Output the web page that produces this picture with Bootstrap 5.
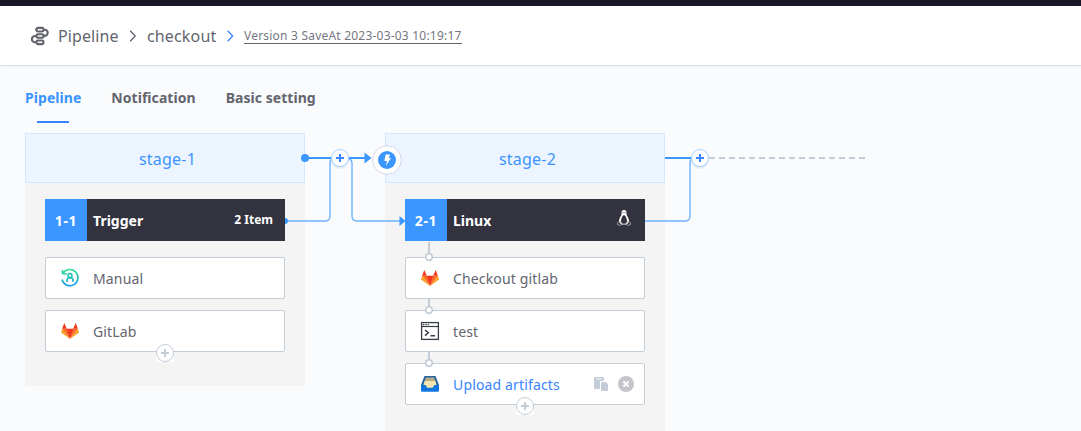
<!DOCTYPE html>
<html lang="en">
<head>
<meta charset="utf-8">
<title>Pipeline</title>
<meta name="viewport" content="width=device-width, initial-scale=1">
<link rel="stylesheet" href="https://cdn.jsdelivr.net/npm/bootstrap@5.3.0/dist/css/bootstrap.min.css">
<style>
body{font-family:"Noto Sans","Open Sans",sans-serif;background:#fafbfd;color:#63656e;height:431px;overflow:hidden}
.topbar{height:6px;background:#181727}
.crumbs{height:60px;background:#fff;border-bottom:1px solid #dcdee5;box-shadow:0 1px 3px rgba(0,0,0,.05);padding-left:30px;font-size:16px;line-height:24px}
.crumbs svg{flex:none}
.crumb-a{width:62px;margin-left:8px;letter-spacing:.1px}
.crumb-b{width:70px;letter-spacing:.15px}
.version{font-size:12px;line-height:15px;border-bottom:1px solid #63656e;width:218px;color:#75777f;letter-spacing:.21px}
.tabs{height:67px;padding:20px 0 0 25px;gap:30px;font-size:14px;font-weight:700;line-height:24px;letter-spacing:.05px}
.tab-on{color:#3a94ff}
.tab-on::after{content:"";display:block;width:32px;height:2px;margin:11px auto 0;background:#3a84ff}
.canvas{gap:80px;padding-left:25px;height:298px}
.stage{width:280px;flex:none;background:#f4f4f4}
.stage-one{height:253px}
.stage-two{height:298px}
.stage-head{height:50px;background:#ecf4ff;border:1px solid #d2e7ff;color:#3c96ff;font-size:16px;padding:2px 0 0 5px;letter-spacing:.2px}
.job{height:42px;margin:16px 20px 0;background:#33333f;color:#fff;font-size:14px;font-weight:700}
.job-no{width:42px;height:42px;background:#3c96ff;letter-spacing:.7px}
.job-name{margin-left:6px}
.item-count{font-size:12px}
.steps{margin:16px 20px 0;gap:11px}
.step{height:42px;flex:none;background:#fff;border:1px solid #c3cdd7;border-radius:2px;padding:0 9px 0 14px;font-size:14px}
.step svg{flex:none}
.step .label{margin-left:13px;white-space:nowrap;letter-spacing:.15px}
.label-on{color:#3a84ff}
.wires{left:0;top:0;pointer-events:none}
</style>
</head>
<body>
<div class="topbar"></div>
<header class="crumbs d-flex align-items-center">
  <svg width="20" height="20" viewBox="0 0 20 20" fill="none" stroke="#63656e" stroke-width="2.1"><rect x="6.5" y="1.9" width="7" height="3.600" rx="1.400"/><rect x="6.5" y="8.200" width="7" height="3.600" rx="1.400"/><rect x="6.5" y="14.500" width="7" height="3.600" rx="1.400"/><path d="M13.300 3.700h1.300a3.100 3.100 0 0 1 0 6.200h-1.300M6.700 3.700H5.300M6.700 10H5a3.100 3.100 0 0 0 0 6.300h1.700"/></svg>
  <span class="crumb-a">Pipeline</span>
  <svg width="27" height="20" viewBox="0 0 27 20" fill="none" stroke="#63656e" stroke-width="1.300"><path d="M10.200 4.800l5 5.200-5 5.200"/></svg>
  <span class="crumb-b">checkout</span>
  <svg width="27" height="20" viewBox="0 0 27 20" fill="none" stroke="#3a84ff" stroke-width="1.300"><path d="M10.700 4.800l5 5.200-5 5.200"/></svg>
  <span class="version text-nowrap">Version 3 SaveAt 2023-03-03 10:19:17</span>
</header>
<nav class="tabs d-flex">
  <div class="tab-on">Pipeline</div>
  <div>Notification</div>
  <div>Basic setting</div>
</nav>
<main class="canvas position-relative overflow-hidden d-flex align-items-start">
  <section class="stage stage-one">
    <div class="stage-head d-flex align-items-center justify-content-center">stage-1</div>
    <div class="job d-flex align-items-center">
      <span class="job-no d-flex align-items-center justify-content-center">1-1</span>
      <span class="flex-grow-1 job-name">Trigger</span>
      <span class="me-2 pe-1 item-count">2 Item</span>
    </div>
    <div class="steps d-flex flex-column">
      <div class="step d-flex align-items-center">
        <svg width="20" height="20" viewBox="0 0 20 20" fill="none" stroke-width="1.600"><defs><linearGradient id="teal" x1="0" y1="0" x2="0" y2="1"><stop offset="0" stop-color="#2fe08e"/><stop offset="1" stop-color="#169cf0"/></linearGradient></defs><path stroke="url(#teal)" d="M3.400 4.800A8.100 8.100 0 1 1 2 11.500M6.800 6L2.500 5.600V2M7 13.900v-1.500c0-1.800 1.300-2.800 3-2.800s3 1 3 2.800v1.500"/><circle cx="10" cy="7.600" r="2" stroke="#24c8b0"/></svg>
        <span class="label">Manual</span>
      </div>
      <div class="step d-flex align-items-center">
        <svg width="20" height="20" viewBox="0 0 20 20"><path fill="#fca326" d="M10 18L1 11.400l1.100-3.600L10 18l7.900-10.200 1.100 3.600z"/><path fill="#fc6d26" d="M10 18L2.100 7.800h4.700L10 18l3.200-10.200h4.700z"/><path fill="#f2371d" d="M10 18L6.500 7.800h7zM2.100 7.800L4.300 1.900l2.500 5.900zM17.900 7.800l-2.200-5.900-2.500 5.900z"/></svg>
        <span class="label">GitLab</span>
      </div>
    </div>
  </section>
  <section class="stage stage-two">
    <div class="stage-head d-flex align-items-center justify-content-center">stage-2</div>
    <div class="job d-flex align-items-center">
      <span class="job-no d-flex align-items-center justify-content-center">2-1</span>
      <span class="flex-grow-1 job-name">Linux</span>
      <svg class="me-2 mb-1" width="26" height="18" viewBox="0 -1 26 18"><path fill="#fff" d="M13 0c-2.100 0-2.700 1.400-2.500 3.300.1 1.600-.4 2.300-1.400 4-.9 1.600-1.300 3.100-1 4.700l2 2.600h5.800l2-2.600c.3-1.600-.1-3.100-1-4.700-1-1.700-1.500-2.400-1.400-4C15.700 1.400 15.100 0 13 0z"/><path fill="#33333f" d="M11.700 5.500h2.600c.2 1.700 2 3.200 1.700 6.200-.8 1.700-1.700 2-3 2s-2.200-.3-3-2c-.3-3 1.500-4.500 1.700-6.200zM11.600 2.100h.8v1h-.8zM13.600 2.100h.8v1h-.8z"/><path fill="none" stroke="#aaaab2" stroke-width=".8" d="M8.500 11.500l-2.100 1.200.2 2 3.100.7 1.300-1.200-1.300-2.500zM17.500 11.500l2.100 1.200-.2 2-3.100.7-1.300-1.200 1.300-2.500z"/></svg>
    </div>
    <div class="steps d-flex flex-column">
      <div class="step d-flex align-items-center">
        <svg width="20" height="20" viewBox="0 0 20 20"><path fill="#fca326" d="M10 18L1 11.400l1.100-3.600L10 18l7.900-10.200 1.100 3.600z"/><path fill="#fc6d26" d="M10 18L2.100 7.800h4.700L10 18l3.200-10.200h4.700z"/><path fill="#f2371d" d="M10 18L6.500 7.800h7zM2.100 7.800L4.300 1.900l2.500 5.900zM17.900 7.800l-2.200-5.900-2.500 5.900z"/></svg>
        <span class="label">Checkout gitlab</span>
      </div>
      <div class="step d-flex align-items-center">
        <svg width="20" height="20" viewBox="0 0 20 20" fill="none" stroke="#3a3c48"><rect x="1.600" y="1.600" width="16.800" height="16.800" stroke-width="1.300"/><path stroke-width="1.200" d="M1.500 5.500h17"/><path stroke-width="1.300" stroke-dasharray="1.300 1" d="M3 3.600h6"/><path stroke-width="1.500" d="M5 9l3.300 2.800L5 14.600M10.500 14.700H15"/></svg>
        <span class="label">test</span>
      </div>
      <div class="step d-flex align-items-center">
        <svg width="20" height="20" viewBox="0 0 20 20"><path fill="#2563a3" d="M4.500 2h11l3.500 9v5H1v-5z"/><path fill="#b8ad84" d="M5.800 3.400h8.400l1.500 5H4.300z"/><path fill="#f2e5af" d="M4.600 7h10.800l1.300 4.200L14.500 15h-9l-2.200-3.800z"/><path fill="#0f76df" d="M1 11h4.700l1.400 2.700h5.800l1.400-2.700H19v5.600q0 1.200-1.200 1.200H2.200Q1 17.800 1 16.600z"/></svg>
        <span class="label label-on flex-grow-1">Upload artifacts</span>
        <svg width="16" height="16" viewBox="0 0 16 16" fill="#c3cdd7"><path d="M2 1h8q1 0 1 1v3H8.200Q7 5 7 6.200V13H2q-1 0-1-1V2q0-1 1-1z"/><path d="M9 6h4l2 2.400V14q0 1-1 1H9q-1 0-1-1V7q0-1 1-1z"/><path fill="#fff" d="M3.500 2.500h5v1h-5z"/></svg>
        <svg class="ms-2" width="18" height="18" viewBox="0 0 18 18"><circle cx="9" cy="9" r="8" fill="#c4c6cc"/><path d="M6.400 6.400l5.200 5.200M11.600 6.400l-5.200 5.200" stroke="#fff" stroke-width="2"/></svg>
      </div>
    </div>
  </section>
  <!-- Connectors and nodes drawn over the stages -->
  <svg class="wires position-absolute" width="1081" height="298" viewBox="0 133 1081 298" fill="none">
    <defs>
      <g id="add"><circle r="9" cy="2" fill="#3c96ff" opacity=".12"/><circle r="8.500" fill="#fff" stroke="#a9d1ff"/><path d="M-4 0h8M0-4v8" stroke="#3a84ff" stroke-width="2"/></g>
      <g id="more"><path fill="#fff" d="M-9 0H9V9H-9z"/><circle r="8.500" fill="#fff" stroke="#c3cdd7"/><path d="M-4 0h8M0-4v8" stroke="#c3cdd7" stroke-width="2"/></g>
      <circle id="dot" r="3.300" fill="#fff" stroke="#c3cdd7" stroke-width="1.700"/>
    </defs>
    <g stroke="#6eb1ff" stroke-width="1.400"><path d="M285 221h40q5 0 5-5v-53q0-5 5-5M345 158q7 0 7 5v53q0 5 5 5h44M645 221h40q5 0 5-5v-53q0-5 5-5"/></g>
    <g stroke="#3c96ff" stroke-width="2"><path d="M305 158h61M665 158h35"/></g>
    <path d="M709 158h156" stroke="#c3c9d7" stroke-width="2" stroke-dasharray="6 4"/>
    <g fill="#3c96ff"><circle cx="305" cy="158" r="4"/><path d="M285 218a3 3 0 0 1 0 6zM364.500 152.500l7 5.500-7 5.500zM399.500 216l6 5-6 5z"/></g>
    <use href="#add" x="340" y="158"/><use href="#add" x="700" y="158"/>
    <circle cx="387" cy="160" r="14.300" fill="#fff" stroke="#d5d6e6"/><circle cx="387" cy="160" r="9" fill="#3c96ff"/><path fill="#fff" d="M385.600 154.500h4.600l-1.500 3.600h2.300l-5.200 7.900 1.200-5h-2.700z"/>
    <g stroke="#c3cdd7" stroke-width="2"><path d="M429 242v13M429 299v9M429 352v9"/></g>
    <use href="#dot" x="429" y="257"/><use href="#dot" x="429" y="310"/><use href="#dot" x="429" y="363"/>
    <use href="#more" x="165" y="353"/><use href="#more" x="525" y="406"/>
  </svg>
</main>
<script src="https://cdn.jsdelivr.net/npm/bootstrap@5.3.0/dist/js/bootstrap.bundle.min.js"></script>
</body>
</html>
